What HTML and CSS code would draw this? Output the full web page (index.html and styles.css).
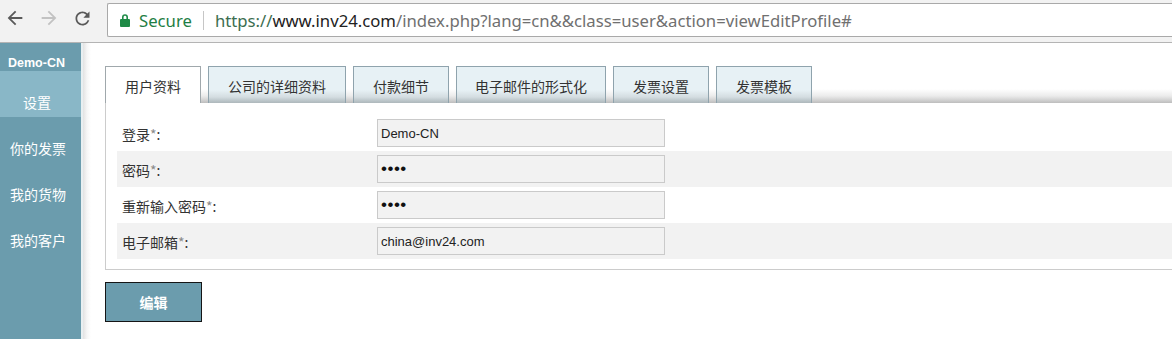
FILE: index.html
```html
<!DOCTYPE html>
<html lang="zh-CN">
<head>
<meta charset="utf-8">
<title>inv24 - 用户资料</title>
<link rel="stylesheet" href="styles.css">
</head>
<body>
<div class="chrome">
  <div class="nav">
    <svg class="nav-icon" viewBox="0 0 24 24" width="22" height="22"><path d="M20 11H7.83l5.59-5.59L12 4l-8 8 8 8 1.41-1.41L7.83 13H20v-2z"/></svg>
    <svg class="nav-icon disabled" viewBox="0 0 24 24" width="22" height="22"><path d="M4 11h12.17l-5.59-5.59L12 4l8 8-8 8-1.41-1.41L16.17 13H4v-2z"/></svg>
    <svg class="nav-icon" viewBox="0 0 24 24" width="21" height="21"><path d="M17.65 6.35C16.2 4.9 14.21 4 12 4c-4.42 0-7.99 3.58-7.99 8s3.57 8 7.99 8c3.73 0 6.84-2.55 7.73-6h-2.08c-.82 2.33-3.04 4-5.65 4-3.31 0-6-2.69-6-6s2.69-6 6-6c1.66 0 3.14.69 4.22 1.78L13 11h7V4l-2.35 2.35z"/></svg>
  </div>
  <div class="omnibox">
    <svg class="lock" viewBox="0 0 12 14" width="12" height="14"><path d="M3 6V4.2a3 3 0 0 1 6 0V6h-1.6V4.2a1.4 1.4 0 0 0-2.8 0V6z"/><rect x="1" y="6" width="10" height="8" rx="1"/></svg>
    <span class="secure">Secure</span>
    <span class="sep"></span>
    <span class="url"><span class="scheme">https://</span><span class="host">www.inv24.com</span><span class="path">/index.php?lang=cn&amp;&amp;class=user&amp;action=viewEditProfile#</span></span>
  </div>
</div>
<div class="app">
  <aside class="sidebar">
    <div class="user">Demo-CN</div>
    <div class="item active">设置</div>
    <div class="item">你的发票</div>
    <div class="item">我的货物</div>
    <div class="item">我的客户</div>
  </aside>
  <main class="content">
    <div class="tabs">
      <div class="tab active">用户资料</div>
      <div class="tab">公司的详细资料</div>
      <div class="tab">付款细节</div>
      <div class="tab tab-long">电子邮件的形式化</div>
      <div class="tab">发票设置</div>
      <div class="tab">发票模板</div>
    </div>
    <div class="panel">
      <div class="row">
        <label class="label">登录<span class="req">*</span>:</label>
        <input class="field" type="text" value="Demo-CN">
      </div>
      <div class="row alt">
        <label class="label">密码<span class="req">*</span>:</label>
        <input class="field secret" type="password" value="1234">
      </div>
      <div class="row">
        <label class="label">重新输入密码<span class="req">*</span>:</label>
        <input class="field secret" type="password" value="1234">
      </div>
      <div class="row alt">
        <label class="label">电子邮箱<span class="req">*</span>:</label>
        <input class="field" type="text" value="china@inv24.com">
      </div>
    </div>
    <button class="btn" type="button">编辑</button>
  </main>
</div>
</body>
</html>
```
FILE: styles.css
```css
* { box-sizing: border-box; }
html, body {
  margin: 0;
  padding: 0;
  width: 1172px;
  height: 339px;
  overflow: hidden;
  background: #fff;
  font-family: "Noto Sans CJK SC", "Liberation Sans", sans-serif;
}

/* browser chrome */
.chrome {
  height: 43px;
  background: #f2f2f2;
  border-bottom: 1px solid #b4b4b4;
  display: flex;
  align-items: flex-start;
}
.nav {
  display: flex;
  align-items: center;
  gap: 12px;
  padding: 7px 0 0 4px;
  height: 29px;
}
.nav-icon { fill: #5a5a5a; display: block; }
.nav-icon.disabled { fill: #c2c2c2; }
.omnibox {
  margin: 3px 0 0 14px;
  height: 34px;
  flex: 1;
  background: #fff;
  border: 1px solid #a9a9a9;
  border-right: none;
  border-radius: 2px 0 0 2px;
  display: flex;
  align-items: center;
  padding-left: 11px;
  font-family: "Noto Sans", "Open Sans", sans-serif;
  font-size: 16.7px;
  white-space: nowrap;
}
.lock { fill: #1e8a46; display: block; margin-top: -1px; }
.secure { color: #1e7e44; margin-left: 8px; }
.sep {
  width: 1px;
  height: 19px;
  background: #c6c6c6;
  margin: 0 11px 0 11px;
}
.scheme { color: #3c6e50; }
.host { color: #222; }
.path { color: #707070; }

/* app */
.app {
  display: flex;
  height: 296px;
}
.sidebar {
  width: 83px;
  background: #6b9cad;
  border-right: 2px solid #e8eff1;
  color: #fff;
  font-size: 14px;
}
.user {
  height: 28px;
  padding: 12px 0 0 8px;
  line-height: 16px;
  font-family: "Liberation Sans", sans-serif;
  font-weight: bold;
  font-size: 12.5px;
}
.item {
  height: 46px;
  padding: 23px 0 0 10px;
  line-height: 16px;
}
.item.active {
  background: #89b7c7;
  padding-left: 23px;
}

.content {
  flex: 1;
  padding: 23px 0 0 22px;
  background: linear-gradient(to right, #e2e2e2 0, #f6f6f6 4px, #fff 8px) no-repeat;
  min-width: 0;
}
.tabs {
  display: flex;
  gap: 7px;
  height: 37px;
  background: linear-gradient(to bottom, #fff 0, #fff 23px, #ebebeb 30px, #d2d2d2 34px, #bdbdbd 37px);
}
.tab {
  height: 37px;
  padding: 2px 19px 0;
  line-height: 34px;
  font-size: 14px;
  color: #333;
  border: 1px solid #8fa3ad;
  border-bottom: none;
  background: linear-gradient(to bottom, #e7f1f5 0, #e7f1f5 23px, #d4dde1 30px, #b9c3c7 34px, #a9b2b6 37px);
  white-space: nowrap;
}
.tab.tab-long { padding: 2px 18px 0; }
.tab.active {
  background: #fff;
  border-color: #a0a8ac;
}

.panel {
  border-left: 1px solid #cccccc;
  border-bottom: 1px solid #cccccc;
  padding: 12px 0 10px 11px;
}
.row {
  height: 36px;
  display: flex;
  align-items: center;
}
.row.alt { background: #f2f2f2; }
.label {
  width: 260px;
  padding-left: 5px;
  font-size: 14px;
  color: #333;
  line-height: 18px;
  padding-top: 2px;
}
.req { color: #8a8a8a; }
.field {
  width: 288px;
  height: 28px;
  margin: 0;
  border: 1px solid #cacaca;
  background: #f2f2f2;
  padding: 0 3px;
  font-family: "Liberation Sans", sans-serif;
  font-size: 13px;
  color: #222;
  outline: none;
}
.field.secret {
  font-size: 17px;
  letter-spacing: 0.5px;
  color: #111;
}

.btn {
  display: block;
  margin-top: 12px;
  width: 97px;
  height: 40px;
  background: #6b9cad;
  border: 1px solid #151515;
  color: #fff;
  font-family: "Noto Sans CJK SC", sans-serif;
  font-weight: bold;
  font-size: 14px;
  padding: 0;
}
```
